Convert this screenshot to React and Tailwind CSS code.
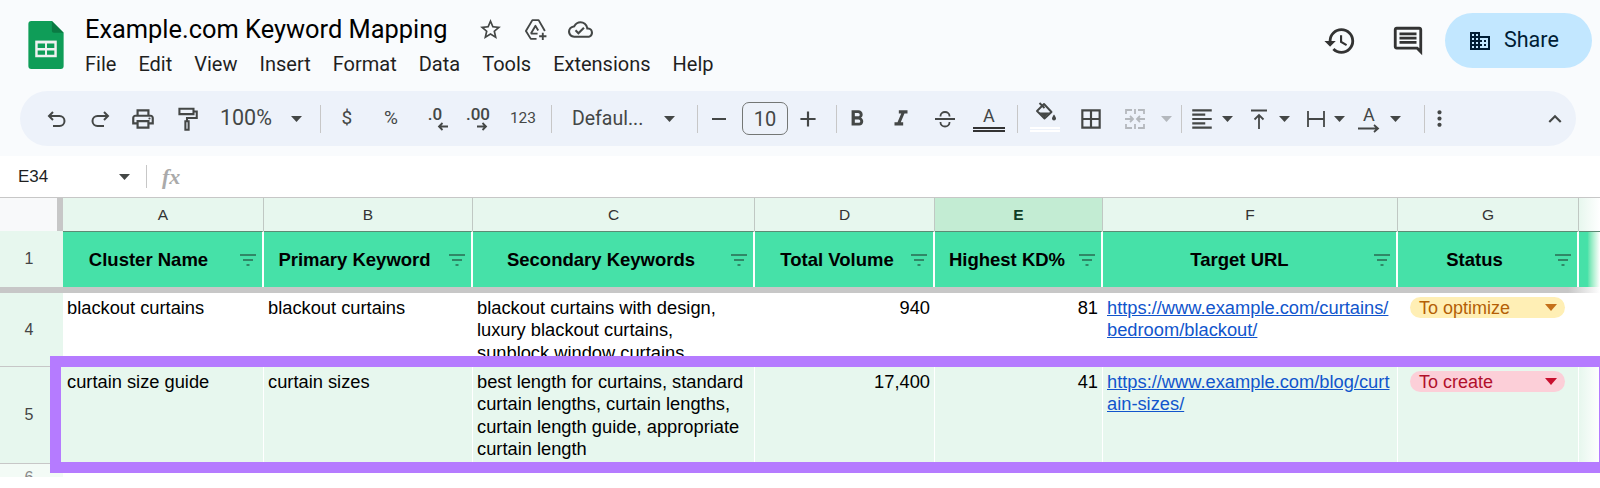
import React from "react";
import {
  MdOutlinePrint, MdRemove, MdAdd,
  MdFormatBold, MdFormatItalic, MdBorderAll,
  MdFormatAlignLeft, MdMoreVert, MdExpandLess, MdStarBorder,
  MdOutlineCloudDone, MdHistory, MdOutlineComment, MdOutlineDomain,
} from "react-icons/md";

const Caret = ({ c = "text-[#444746]", w = "w-[24px]" }) => (
  <span className={`flex ${w} shrink-0 justify-center ${c}`}>
    <svg width="11" height="6" viewBox="0 0 11 6"><path d="M0 0h11L5.5 6z" fill="currentColor" /></svg>
  </span>
);
const Sep = ({ m = "" }) => <span className={`h-[28px] w-[1px] shrink-0 bg-[#c7c7c7] ${m}`} />;
const Btn = ({ w = "w-[43.4px]", m = "", children }) => (
  <span className={`flex ${w} ${m} h-full shrink-0 items-center justify-center text-[#444746]`}>{children}</span>
);

function Sheets() {
  return (
    <svg width="36" height="48" viewBox="0 0 36 49">
      <path d="M3 0h21l12 12v34a3 3 0 0 1-3 3H3a3 3 0 0 1-3-3V3a3 3 0 0 1 3-3z" fill="#0f9d58" />
      <path d="M24 0l12 12H26a2 2 0 0 1-2-2z" fill="#0b7a43" />
      <path d="M7 20h22v17H7z" fill="#f1f1f1" />
      <path d="M9.5 23h7.5v4.5H9.5zM19 23h7.5v4.5H19zM9.5 30h7.5v4.5H9.5zM19 30h7.5v4.5H19z" fill="#0f9d58" />
    </svg>
  );
}

const Filter = () => (
  <svg width="18" height="14" viewBox="0 0 18 14" className="absolute right-[5px] top-[21px]" fill="none" stroke="#2a6b52" strokeWidth="1.4">
    <path d="M1 2h16M4 7h10M7.5 12h3" />
  </svg>
);

const heads = [
  ["A", "Cluster Name", "pr-[28px]"],
  ["B", "Primary Keyword", "pr-[26px]"],
  ["C", "Secondary Keywords", "pr-[24px]"],
  ["D", "Total Volume", "pr-[14px]"],
  ["E", "Highest KD%", "pr-[22px]"],
  ["F", "Target URL", "pr-[20px]"],
  ["G", "Status", "pr-[26px]"],
];

const Cell = ({ bg = "", right, children }) => (
  <div className={`h-full overflow-hidden border-r border-white px-[4px] pt-[4px] text-[18.3px] leading-[22.4px] text-black ${bg} ${right ? "text-right" : ""}`}>
    {children}
  </div>
);
const Link = ({ children }) => <span className="whitespace-nowrap text-[#1155cc] underline">{children}</span>;
const Chip = ({ bg, color, caret, label }) => (
  <div className={`ml-[8px] flex h-[21px] w-[155px] items-center justify-between rounded-full pl-[9px] pr-[8px] ${bg} ${color}`}>
    <span className="text-[18px] leading-none">{label}</span>
    <svg width="12" height="7" viewBox="0 0 12 7"><path d="M0 0h12L6 7z" fill={caret} /></svg>
  </div>
);
const RowNum = ({ children }) => (
  <div className="flex items-center justify-center border-b border-[#c7c7c7] bg-[#e7f7ee] pr-[5px] text-[16px] text-[#444]">{children}</div>
);

export default function App() {
  return (
    <div className="relative h-[488px] w-[1600px] overflow-hidden bg-white [font-family:'Liberation_Sans',Arial,sans-serif]">
      <div className="h-[156px] bg-[#f9fbfd] [font-family:Roboto,sans-serif]">
        <div className="flex h-[91px] items-start pl-[28px]">
          <div className="mt-[21px]"><Sheets /></div>
          <div className="ml-[21px] mt-[14px]">
            <div className="flex h-[30px] items-center">
              <span className="text-[25.4px] leading-[30px] text-black">Example.com Keyword Mapping</span>
              <span className="ml-[31px] flex items-center gap-[20px] text-[#444746]">
                <MdStarBorder size={25} />
                <svg width="25" height="25" viewBox="0 0 24 24" fill="none" stroke="currentColor" strokeWidth="1.8" strokeLinejoin="round">
                  <path d="M13 21H7.5L2.8 13.5 9 3h6l6 10.5" />
                  <path d="M7.5 16L12 8.5l2.6 4.5M7.5 16H14" />
                  <path d="M19 15v7M15.5 18.5h7" />
                </svg>
                <MdOutlineCloudDone size={25} />
              </span>
            </div>
            <div className="mt-[7px] flex gap-[22px] text-[20px] leading-[26px] text-[#1f1f1f]">
              {["File", "Edit", "View", "Insert", "Format", "Data", "Tools", "Extensions", "Help"].map((m) => (
                <span key={m}>{m}</span>
              ))}
            </div>
          </div>
          <div className="ml-auto mr-[8px] mt-[13px] flex items-center">
            <MdHistory size={34} className="text-[#333]" />
            <MdOutlineComment size={34} className="ml-[34px] text-[#333]" />
            <div className="ml-[20px] flex h-[55px] w-[147px] items-center justify-start gap-[12px] rounded-full bg-[#c2e7ff] pl-[23px] text-[21.5px] text-[#001d35]">
              <MdOutlineDomain size={24} />
              <span>Share</span>
            </div>
          </div>
        </div>

        <div className="ml-[20px] flex h-[55px] w-[1556px] items-center rounded-full bg-[#edf2fa] pl-[15px] text-[#444746]">
          <Btn>
            <svg width="24" height="24" viewBox="0 0 24 24" fill="none" stroke="currentColor" strokeWidth="2"><path d="M8 5L4 9l4 4M4 9h10.5a5 5 0 0 1 0 10H8" /></svg>
          </Btn>
          <Btn>
            <svg width="24" height="24" viewBox="0 0 24 24" fill="none" stroke="currentColor" strokeWidth="2"><path d="M16 5l4 4-4 4M20 9H9.5a5 5 0 0 0 0 10H16" /></svg>
          </Btn>
          <Btn><MdOutlinePrint size={26} /></Btn>
          <Btn>
            <svg width="26" height="26" viewBox="0 0 24 24" fill="none" stroke="currentColor" strokeWidth="1.9"><path d="M5 2.5h13v5H5zM18 5h3v6h-9v3M10.5 14h3v8h-3z" /></svg>
          </Btn>
          <span className="ml-[11.4px] w-[53px] shrink-0 text-[21.5px]">100%</span>
          <Caret w="w-[47px]" />
          <Sep />
          <Btn w="w-[52px]"><span className="text-[19px]">$</span></Btn>
          <Btn w="w-[36px]"><span className="text-[19px]">%</span></Btn>
          <Btn w="w-[52px]">
            <span className="relative -mt-[7px] text-[17px] font-medium">.0
              <svg className="absolute left-[9px] top-[20px]" width="11" height="9" viewBox="0 0 11 9"><path d="M11 4.5H2M5.5 1L2 4.5 5.5 8" fill="none" stroke="currentColor" strokeWidth="1.8" /></svg>
            </span>
          </Btn>
          <Btn w="w-[34px]">
            <span className="relative -mt-[7px] text-[17px] font-medium">.00
              <svg className="absolute left-[11px] top-[20px]" width="11" height="9" viewBox="0 0 11 9"><path d="M0 4.5h9M5.5 1L9 4.5 5.5 8" fill="none" stroke="currentColor" strokeWidth="1.8" /></svg>
            </span>
          </Btn>
          <Btn w="w-[56px]"><span className="text-[15.5px]">123</span></Btn>
          <Sep />
          <span className="ml-[20px] w-[75px] shrink-0 whitespace-nowrap text-[19.5px]">Defaul...</span>
          <Caret w="w-[46px]" />
          <Sep m="ml-[4px]" />
          <Btn w="w-[42px]"><MdRemove size={24} /></Btn>
          <span className="ml-[2px] flex h-[33px] w-[46px] shrink-0 items-center justify-center rounded-[7px] border border-[#747775] text-[20px]">10</span>
          <Btn w="w-[40px]"><MdAdd size={26} /></Btn>
          <Sep m="ml-[8px]" />
          <Btn w="w-[40px]"><MdFormatBold size={26} /></Btn>
          <Btn w="w-[48px]"><MdFormatItalic size={26} /></Btn>
          <Btn w="w-[40px]">
            <svg width="24" height="24" viewBox="0 0 24 24" fill="none" stroke="currentColor" strokeWidth="1.8">
              <path d="M2 12h20M7.5 9.5V9a4.5 4 0 0 1 9 0v.5M7.5 15v.5a4.5 4 0 0 0 9 0V15" />
            </svg>
          </Btn>
          <Btn w="w-[48px]">
            <span className="flex w-[32px] flex-col items-center">
              <span className="text-[18px] leading-[22px]">A</span>
              <span className="h-[2px] w-[32px] bg-[#333]" />
              <span className="mt-[1px] h-[2px] w-[32px] bg-[#333]" />
            </span>
          </Btn>
          <Sep m="ml-[4px]" />
          <Btn w="w-[54px]">
            <span className="flex flex-col items-center">
              <svg width="24" height="22" viewBox="0 0 24 22" className="-mt-[4px]">
                <path d="M4 9l7-7 7.5 8-7 6.5z" fill="none" stroke="currentColor" strokeWidth="1.9" strokeLinejoin="round" />
                <path d="M6 10.5h11l-5.5 5z" fill="currentColor" />
                <path d="M6.5 1l5 5" stroke="currentColor" strokeWidth="1.9" />
                <path d="M21 12.5c1.4 2 2 3 2 4a2 2 0 0 1-4 0c0-1 .6-2 2-4z" fill="currentColor" />
              </svg>
              <span className="mt-[3px] h-[2px] w-[30px] bg-white" />
              <span className="mt-[1px] h-[2px] w-[30px] bg-white" />
            </span>
          </Btn>
          <Btn w="w-[38px]"><MdBorderAll size={26} /></Btn>
          <Btn w="w-[50px]">
            <svg width="24" height="24" viewBox="0 0 24 24" fill="none" stroke="#b4b8bd" strokeWidth="1.8">
              <path d="M3 7V3h6M15 3h6v4M3 17v4h6M15 21h6v-4M12 2v5M12 17v5M2 12h7M22 12h-7M7 9l3 3-3 3M17 9l-3 3 3 3" />
            </svg>
          </Btn>
          <Caret c="text-[#b4b8bd]" w="w-[14px]" />
          <Sep m="ml-[7px]" />
          <Btn w="w-[26px]" m="ml-[7px]"><MdFormatAlignLeft size={26} /></Btn>
          <Caret w="w-[26px]" />
          <Btn w="w-[26px]" m="ml-[5px]">
            <svg width="24" height="24" viewBox="0 0 24 24" fill="none" stroke="currentColor" strokeWidth="1.8"><path d="M4 3.5h16M12 22V8M7.5 12.5L12 8l4.5 4.5" /></svg>
          </Btn>
          <Caret w="w-[26px]" />
          <Btn w="w-[26px]" m="ml-[5px]">
            <svg width="24" height="24" viewBox="0 0 24 24" fill="none" stroke="currentColor" strokeWidth="1.8"><path d="M4 4v16M20 4v16M4 12h16" /></svg>
          </Btn>
          <Caret w="w-[22px]" />
          <Btn w="w-[26px]" m="ml-[5px]">
            <span className="flex flex-col items-center">
              <span className="text-[18px] leading-[19px]">A</span>
              <svg width="24" height="9" viewBox="0 0 24 9"><path d="M1 4.5h20M17 1l4 3.5L17 8" fill="none" stroke="currentColor" strokeWidth="1.8" /></svg>
            </span>
          </Btn>
          <Caret w="w-[28px]" />
          <Sep m="ml-[14px]" />
          <Btn w="w-[30px]"><MdMoreVert size={25} /></Btn>
          <span className="ml-[87px]"><MdExpandLess size={26} /></span>
        </div>
      </div>

      <div className="flex h-[41px] items-center bg-white">
        <span className="w-[115px] shrink-0 pl-[18px] text-[17px] text-[#1f1f1f]">E34</span>
        <Caret w="w-[18px]" />
        <span className="ml-[13px] h-[23px] w-[1px] bg-[#c7c7c7]" />
        <span className="ml-[15px] text-[22px] font-bold italic text-[#aaa] [font-family:'Liberation_Serif',serif]">fx</span>
      </div>

      <div className="grid grid-cols-[63px_201px_209px_282px_180px_168px_295px_181px_1fr] grid-rows-[33px_56px_6px_74px_97px_13px] border-t border-[#c7c7c7]">
        <div className="border-r-[6px] border-[#c7c7c7] bg-[#f8f9fa]" />
        {heads.map(([l]) => (
          <div key={l} className={`flex items-center justify-center border-r border-[#c0c8c3] text-[15.5px] ${l === "E" ? "bg-[#c3ecd3] font-bold text-[#0f3d25]" : "bg-[#e7f7ee] text-[#333]"}`}>{l}</div>
        ))}
        <div className="bg-gradient-to-r from-[#e7f7ee] to-white" />

        <div className="flex items-center justify-center bg-[#e7f7ee] pr-[5px] text-[16px] text-[#444]">1</div>
        {heads.map(([l, t, p]) => (
          <div key={l} className="relative flex items-center justify-center border-r-2 border-t border-white border-t-[#5d8a74] bg-[#46e1a8] text-[18.5px] font-bold whitespace-nowrap text-black">
            <span className={p}>{t}</span>
            <Filter />
          </div>
        ))}
        <div className="border-t border-[#5d8a74] bg-gradient-to-r from-[#46e1a8] from-40% to-white" />

        <div className="col-span-9 bg-gradient-to-r from-[#c7c7c7] from-98% to-white" />

        <RowNum>4</RowNum>
        <Cell>blackout curtains</Cell>
        <Cell>blackout curtains</Cell>
        <Cell>blackout curtains with design, luxury blackout curtains, sunblock window curtains</Cell>
        <Cell right>940</Cell>
        <Cell right>81</Cell>
        <Cell><Link>https://www.example.com/curtains/<br />bedroom/blackout/</Link></Cell>
        <Cell><Chip bg="bg-[#ffefb5]" color="text-[#b45f06]" caret="#c5701a" label="To optimize" /></Cell>
        <div />

        <RowNum>5</RowNum>
        <Cell bg="bg-[#e7f7ee]">curtain size guide</Cell>
        <Cell bg="bg-[#e7f7ee]">curtain sizes</Cell>
        <Cell bg="bg-[#e7f7ee]">best length for curtains, standard curtain lengths, curtain lengths, curtain length guide, appropriate curtain length</Cell>
        <Cell bg="bg-[#e7f7ee]" right>17,400</Cell>
        <Cell bg="bg-[#e7f7ee]" right>41</Cell>
        <Cell bg="bg-[#e7f7ee]"><Link>https://www.example.com/blog/curt<br />ain-sizes/</Link></Cell>
        <Cell bg="bg-[#e7f7ee]"><Chip bg="bg-[#fccfd8]" color="text-[#b1102b]" caret="#c8102e" label="To create" /></Cell>
        <div className="bg-gradient-to-r from-[#e7f7ee] to-white" />

        <div className="overflow-hidden bg-[#f3fbf6] pr-[5px] pt-[5px] text-center text-[16px] leading-[18px] text-[#888]">6</div>
        <div className="col-span-8 bg-white" />
      </div>

      {/* purple highlight laid over the sheet */}
      <div className="absolute left-[50px] top-[356px] h-[117px] w-[1560px] border-[11px] border-[#b57bff]" />
    </div>
  );
}
